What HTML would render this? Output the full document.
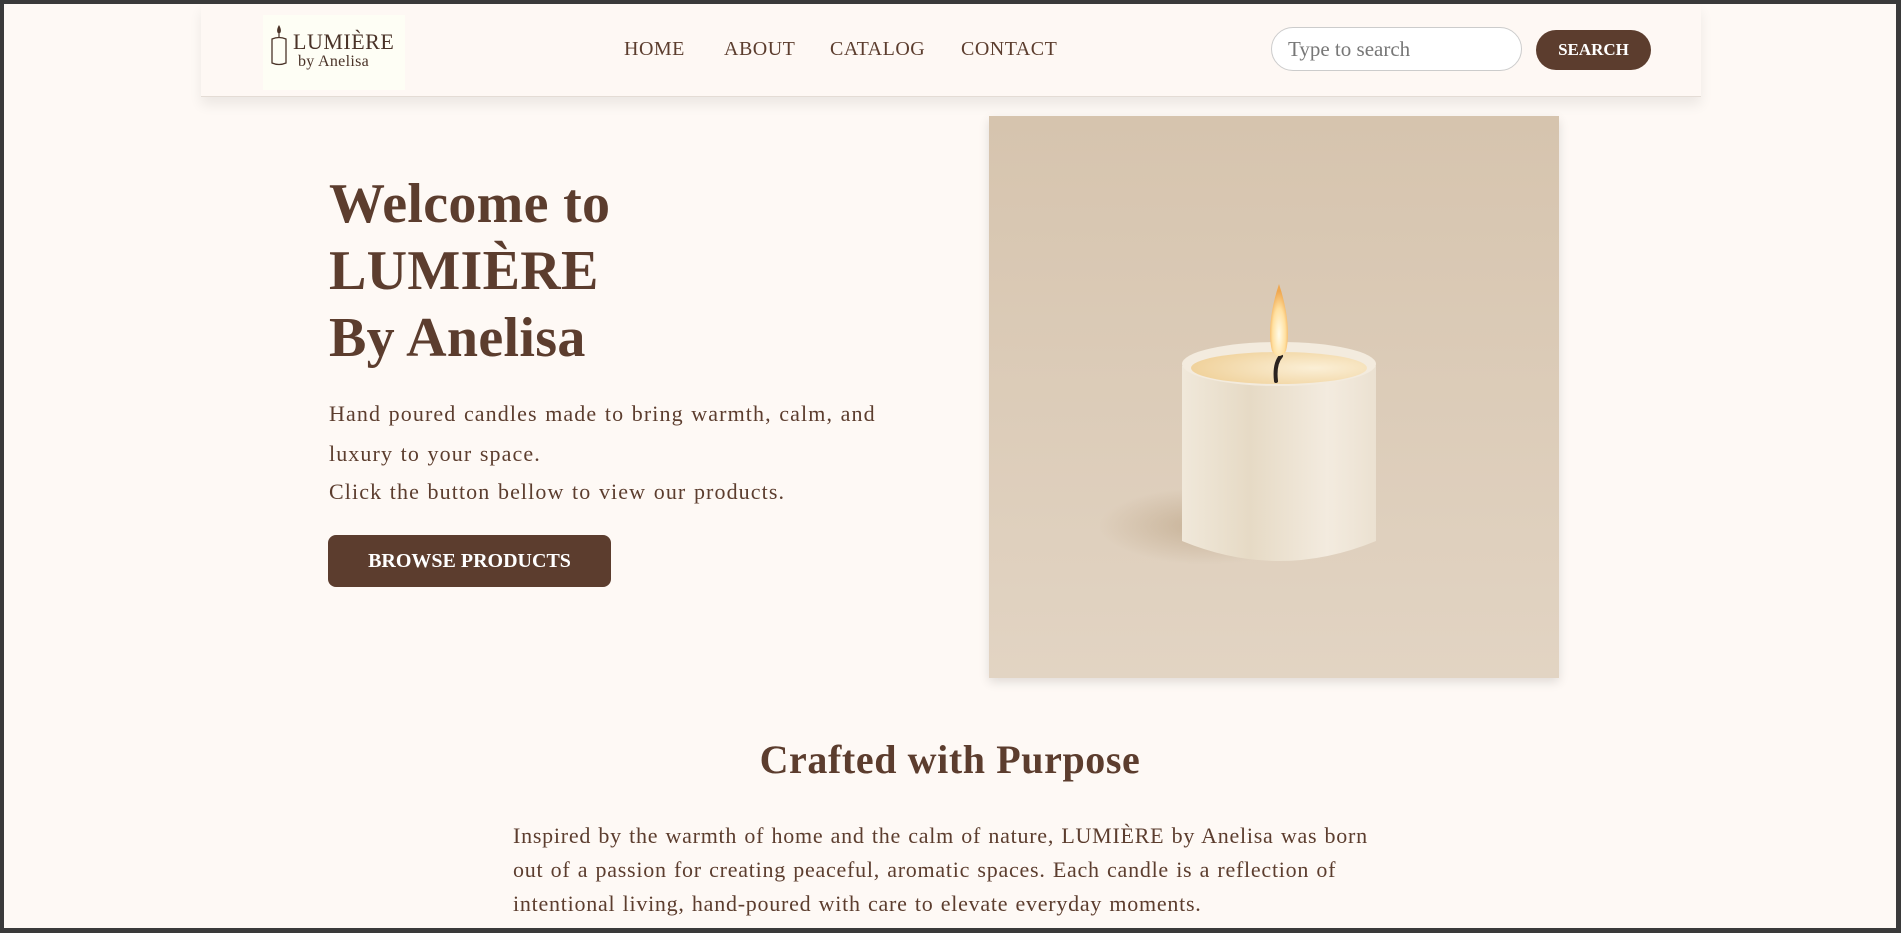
<!DOCTYPE html>
<html><head><meta charset="utf-8"><style>
*{margin:0;padding:0;box-sizing:border-box}
html,body{width:1901px;height:933px;overflow:hidden;background:#3a3a3a}
.page{position:absolute;left:4px;top:4px;width:1892px;height:924px;background:#fef9f5;overflow:hidden;font-family:"Liberation Serif",serif;color:#5c3d2e}
.header{position:absolute;left:197px;top:0;width:1500px;height:93px;background:#fef8f4;border-bottom:1px solid #e4dcd5;box-shadow:0 8px 12px rgba(0,0,0,0.07)}
.logo{position:absolute;left:62px;top:11px;width:142px;height:75px;background:#fefef5}
.logo .t1{position:absolute;left:30px;top:14px;font-size:22px;letter-spacing:0.5px;color:#4a3328}
.logo .t2{position:absolute;left:35px;top:38px;font-size:16px;letter-spacing:0.3px;color:#4a3328}
.nav{position:absolute;top:34px;font-size:20px;letter-spacing:0.5px}
.search{position:absolute;left:1070px;top:23px;width:251px;height:44px;border:1px solid #ccc;border-radius:22px;background:#fff;font-size:21px;color:#777;padding:9px 16px}
.sbtn{position:absolute;left:1335px;top:26px;width:115px;height:40px;border-radius:20px;background:#5c3d2e;color:#fff;font-weight:bold;font-size:17px;text-align:center;line-height:40px}
h1{position:absolute;left:325px;top:167px;font-size:56px;line-height:67px;font-weight:bold;letter-spacing:0.3px}
.p1{position:absolute;left:325px;top:390px;width:560px;font-size:22px;line-height:40px;letter-spacing:1.1px;word-spacing:1px}
.btn{position:absolute;left:324px;top:531px;width:283px;height:52px;border-radius:8px;background:#5c3d2e;color:#fff;font-weight:bold;font-size:20px;text-align:center;line-height:52px}
.img{position:absolute;left:985px;top:112px;width:570px;height:562px;box-shadow:0 4px 10px rgba(0,0,0,0.12)}
h2{position:absolute;left:0;width:1892px;text-align:center;top:732px;font-size:40px;font-weight:bold;letter-spacing:0.6px}
.p2{position:absolute;left:509px;top:815px;width:875px;font-size:22px;line-height:34px;letter-spacing:0.75px;word-spacing:1px}
</style></head><body><div class="page">
<div class="header">
 <div class="logo">
  <svg width="24" height="50" style="position:absolute;left:4px;top:6px" viewBox="0 0 24 50"><path d="M12 4 C9 9 10 12 12 13 C14 12 15 9 12 4Z" fill="#4a3328"/><line x1="12" y1="13" x2="12" y2="17" stroke="#4a3328" stroke-width="1.2"/><path d="M5 18 Q12 15 19 18 L19 42 Q12 45 5 42 Z" fill="none" stroke="#4a3328" stroke-width="1.3"/></svg>
  <div class="t1">LUMIÈRE</div><div class="t2">by Anelisa</div>
 </div>
 <div class="nav" style="left:423px">HOME</div>
 <div class="nav" style="left:523px">ABOUT</div>
 <div class="nav" style="left:629px">CATALOG</div>
 <div class="nav" style="left:760px">CONTACT</div>
 <div class="search">Type to search</div>
 <div class="sbtn">SEARCH</div>
</div>
<h1>Welcome to<br>LUMIÈRE<br>By Anelisa</h1>
<div class="p1">Hand poured candles made to bring warmth, calm, and luxury to your space.<br><span style="position:relative;top:-2px">Click the button bellow to view our products.</span></div>
<div class="btn">BROWSE PRODUCTS</div>
<svg class="img" viewBox="0 0 570 562">
 <defs>
  <linearGradient id="bg" x1="0" y1="0" x2="0" y2="1"><stop offset="0" stop-color="#d6c4ae"/><stop offset="1" stop-color="#e2d4c3"/></linearGradient>
  <linearGradient id="body" x1="0" y1="0" x2="1" y2="0"><stop offset="0" stop-color="#f0e8da"/><stop offset="0.35" stop-color="#e6dac5"/><stop offset="0.75" stop-color="#f3ebdf"/><stop offset="1" stop-color="#ebe1d1"/></linearGradient>
  <radialGradient id="wax" cx="0.7" cy="0.5" r="0.7"><stop offset="0" stop-color="#fbefd6"/><stop offset="1" stop-color="#f0d29c"/></radialGradient>
  <radialGradient id="fl" cx="0.5" cy="0.7" r="0.6"><stop offset="0" stop-color="#fffbe8"/><stop offset="0.6" stop-color="#ffe0a0"/><stop offset="1" stop-color="#f0a850"/></radialGradient>
  <radialGradient id="sh" cx="0.5" cy="0.5" r="0.5"><stop offset="0" stop-color="#b49a7a" stop-opacity="0.55"/><stop offset="1" stop-color="#b49a7a" stop-opacity="0"/></radialGradient>
 </defs>
 <rect width="570" height="562" fill="url(#bg)"/>
 <ellipse cx="215" cy="410" rx="105" ry="38" fill="url(#sh)"/>
 <path d="M193 250 L193 425 Q290 465 387 425 L387 250 Z" fill="url(#body)"/>
 <ellipse cx="290" cy="248" rx="97" ry="22" fill="#f3ebde"/>
 <ellipse cx="290" cy="252" rx="88" ry="16" fill="url(#wax)"/>
 <path d="M287 265 Q285 248 292 240" stroke="#2a2320" stroke-width="4" fill="none" stroke-linecap="round"/>
 <path d="M290 168 C281 195 279 220 283 235 Q290 245 297 235 C301 220 299 195 290 168Z" fill="url(#fl)"/>
</svg>
<h2>Crafted with Purpose</h2>
<div class="p2">Inspired by the warmth of home and the calm of nature, LUMIÈRE by Anelisa was born out of a passion for creating peaceful, aromatic spaces. Each candle is a reflection of intentional living, hand-poured with care to elevate everyday moments.</div>
</div></body></html>
